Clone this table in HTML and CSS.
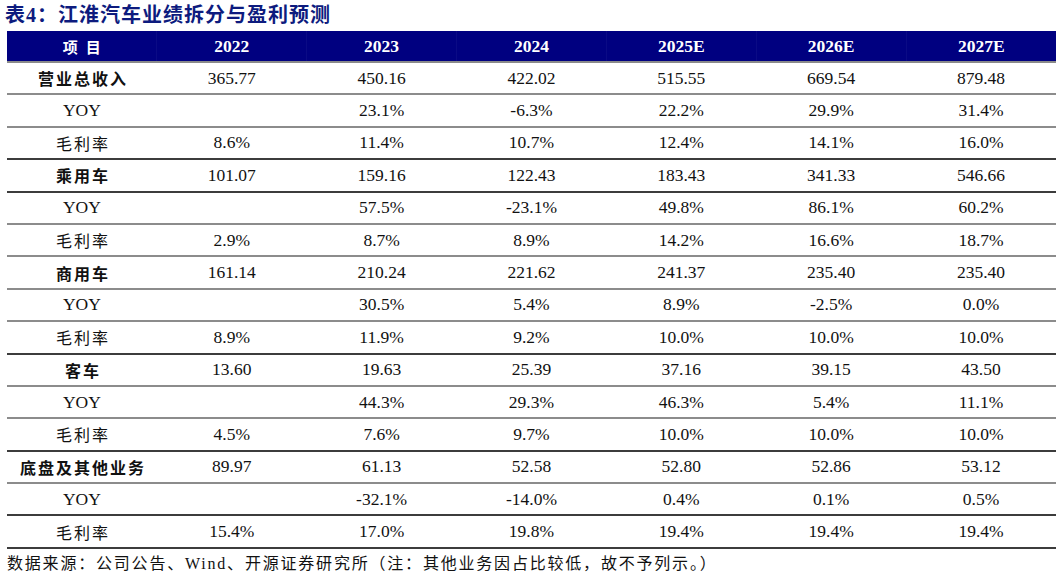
FILE: index.html
```html
<!DOCTYPE html>
<html lang="zh-CN">
<head>
<meta charset="utf-8">
<title>江淮汽车业绩拆分与盈利预测</title>
<link rel="stylesheet" href="styles.css">
</head>
<body>
<div class="page">
  <div class="title">表4：江淮汽车业绩拆分与盈利预测</div>
  <table class="fin">
    <colgroup>
      <col class="c-label"><col><col><col><col><col><col>
    </colgroup>
    <thead>
      <tr>
        <th class="hd-label">项目</th>
        <th>2022</th><th>2023</th><th>2024</th><th>2025E</th><th>2026E</th><th>2027E</th>
      </tr>
    </thead>
    <tbody>
      <tr class="line-gray"><td class="lbl bold">营业总收入</td><td>365.77</td><td>450.16</td><td>422.02</td><td>515.55</td><td>669.54</td><td>879.48</td></tr>
      <tr class="line-gray"><td class="yoy">YOY</td><td></td><td>23.1%</td><td>-6.3%</td><td>22.2%</td><td>29.9%</td><td>31.4%</td></tr>
      <tr class="line-dark"><td class="lbl">毛利率</td><td>8.6%</td><td>11.4%</td><td>10.7%</td><td>12.4%</td><td>14.1%</td><td>16.0%</td></tr>
      <tr class="line-dark"><td class="lbl bold">乘用车</td><td>101.07</td><td>159.16</td><td>122.43</td><td>183.43</td><td>341.33</td><td>546.66</td></tr>
      <tr class="line-gray"><td class="yoy">YOY</td><td></td><td>57.5%</td><td>-23.1%</td><td>49.8%</td><td>86.1%</td><td>60.2%</td></tr>
      <tr class="line-gray"><td class="lbl">毛利率</td><td>2.9%</td><td>8.7%</td><td>8.9%</td><td>14.2%</td><td>16.6%</td><td>18.7%</td></tr>
      <tr class="line-gray"><td class="lbl bold">商用车</td><td>161.14</td><td>210.24</td><td>221.62</td><td>241.37</td><td>235.40</td><td>235.40</td></tr>
      <tr class="line-gray"><td class="yoy">YOY</td><td></td><td>30.5%</td><td>5.4%</td><td>8.9%</td><td>-2.5%</td><td>0.0%</td></tr>
      <tr class="line-dark"><td class="lbl">毛利率</td><td>8.9%</td><td>11.9%</td><td>9.2%</td><td>10.0%</td><td>10.0%</td><td>10.0%</td></tr>
      <tr class="line-gray"><td class="lbl bold">客车</td><td>13.60</td><td>19.63</td><td>25.39</td><td>37.16</td><td>39.15</td><td>43.50</td></tr>
      <tr class="line-gray"><td class="yoy">YOY</td><td></td><td>44.3%</td><td>29.3%</td><td>46.3%</td><td>5.4%</td><td>11.1%</td></tr>
      <tr class="line-dark"><td class="lbl">毛利率</td><td>4.5%</td><td>7.6%</td><td>9.7%</td><td>10.0%</td><td>10.0%</td><td>10.0%</td></tr>
      <tr class="line-gray"><td class="lbl bold">底盘及其他业务</td><td>89.97</td><td>61.13</td><td>52.58</td><td>52.80</td><td>52.86</td><td>53.12</td></tr>
      <tr class="line-dark"><td class="yoy">YOY</td><td></td><td>-32.1%</td><td>-14.0%</td><td>0.4%</td><td>0.1%</td><td>0.5%</td></tr>
      <tr class="line-dark"><td class="lbl">毛利率</td><td>15.4%</td><td>17.0%</td><td>19.8%</td><td>19.4%</td><td>19.4%</td><td>19.4%</td></tr>
    </tbody>
  </table>
  <div class="source">数据来源：公司公告、Wind、开源证券研究所（注：其他业务因占比较低，故不予列示。）</div>
</div>
</body>
</html>
```

FILE: styles.css
```css
html, body {
  margin: 0;
  padding: 0;
  background: #ffffff;
}

.page {
  padding: 0 4px 0 7px;
  font-family: "Liberation Serif", "Noto Sans CJK SC", serif;
  color: #111111;
}

.title {
  height: 31px;
  line-height: 31px;
  font-family: "Liberation Serif", "Noto Sans CJK SC", serif;
  font-weight: 700;
  font-size: 20px;
  letter-spacing: 1px;
  color: #0d1b7e;
  margin-left: -2px;
  box-sizing: border-box;
  padding-bottom: 2px;
}

.fin {
  width: 1049px;
  border-collapse: collapse;
  table-layout: fixed;
}

.fin th {
  background: #000080;
  color: #ffffff;
  height: 30px;
  padding: 0;
  font-size: 17.5px;
  font-weight: 700;
  text-align: center;
  border-bottom: 2px solid #8a8a8a;
  border-right: 1px solid #0a0a85;
}

.fin th:last-child {
  border-right: none;
}

.fin th.hd-label {
  font-family: "Noto Sans CJK SC", sans-serif;
  font-size: 15px;
  letter-spacing: 8px;
  text-indent: 8px;
}

.fin td {
  height: 30.4px;
  padding: 0;
  font-size: 17.5px;
  text-align: center;
  vertical-align: middle;
  color: #111111;
}

.fin tr.line-gray td {
  border-bottom: 2px solid #8c8c8c;
}

.fin tr.line-dark td {
  border-bottom: 2px solid #3c3c3c;
}

.fin td.lbl {
  font-size: 16px;
  letter-spacing: 2px;
  text-indent: 2px;
}

.fin td.lbl.bold {
  font-family: "Noto Sans CJK SC", sans-serif;
  font-weight: 700;
}

.fin td.lbl:not(.bold) {
  font-family: "Liberation Serif", "Noto Sans CJK SC", serif;
}

.fin td.yoy {
  font-size: 17.5px;
}

.source {
  margin-top: 2px;
  font-size: 16px;
  line-height: 26px;
  letter-spacing: 1.8px;
  color: #111111;
}
```
